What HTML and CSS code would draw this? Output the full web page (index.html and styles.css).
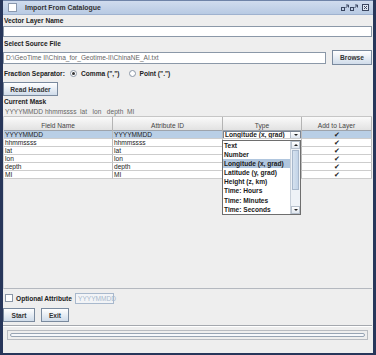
FILE: index.html
```html
<!DOCTYPE html>
<html lang="en">
<head>
    <meta charset="UTF-8">
    <title>Import From Catalogue</title>
    <link rel="stylesheet" href="styles.css">
</head>
<body>

<div class="window">
    <div class="titlebar">
        <span class="title-icon"></span>
        <span class="title">Import From Catalogue</span>
        <span class="title-buttons">
            <svg width="8" height="7" viewBox="0 0 8 7"><rect x="0.5" y="3.5" width="3" height="3" fill="none" stroke="#3a4660"/><path d="M5 1 L7.5 1 L7.5 3.5 M7.5 1 L4.5 4" fill="none" stroke="#3a4660"/></svg>
            <svg width="8" height="7" viewBox="0 0 8 7"><rect x="0.5" y="3.5" width="3" height="3" fill="none" stroke="#3a4660"/><path d="M5 1 L7.5 1 L7.5 3.5 M7.5 1 L4.5 4" fill="none" stroke="#3a4660"/></svg>
            <svg class="close" width="7" height="7" viewBox="0 0 7 7"><rect x="0.5" y="0.5" width="6" height="6" fill="#dfe7f2" stroke="#3a4660"/><path d="M2 2 L5 5 M5 2 L2 5" stroke="#3a4660"/></svg>
        </span>
    </div>

    <div class="content">
        <div class="label">Vector Layer Name</div>
        <div class="field name-field"></div>

        <div class="label">Select Source File</div>
        <div class="file-row">
            <div class="field path-field">D:\GeoTime II\China_for_Geotime-II\ChinaNE_AI.txt</div>
            <button class="btn browse">Browse</button>
        </div>

        <div class="sep-row">
            <span class="sep-label">Fraction Separator:</span>
            <span class="radio checked"></span>
            <span class="radio-text">Comma (",")</span>
            <span class="radio"></span>
            <span class="radio-text">Point (".")</span>
        </div>

        <button class="btn read-header">Read Header</button>

        <div class="label mask-label">Current Mask</div>
        <div class="mask">YYYYMMDD hhmmssss&nbsp; lat &nbsp; lon &nbsp; depth &nbsp;MI</div>

        <div class="table-pane">
            <div class="thead">
                <div class="th">Field Name</div>
                <div class="th">Attribute ID</div>
                <div class="th">Type</div>
                <div class="th">Add to Layer</div>
            </div>
            <div id="rows"></div>

            <div class="popup">
                <div class="popup-list">
                    <div class="item">Text</div>
                    <div class="item">Number</div>
                    <div class="item active">Longitude (x, grad)</div>
                    <div class="item">Latitude (y, grad)</div>
                    <div class="item">Height (z, km)</div>
                    <div class="item">Time: Hours</div>
                    <div class="item">Time: Minutes</div>
                    <div class="item">Time: Seconds</div>
                </div>
                <div class="scrollbar">
                    <div class="arrow up"></div>
                    <div class="track"><div class="thumb"></div></div>
                    <div class="arrow down"></div>
                </div>
            </div>
        </div>

        <div class="opt-row">
            <span class="checkbox"></span>
            <span class="opt-label">Optional Attribute</span>
            <div class="field opt-field">YYYYMMDD</div>
        </div>

        <div class="btn-row">
            <button class="btn start">Start</button>
            <button class="btn exit">Exit</button>
        </div>

        <div class="progress-area">
            <div class="progress"><div class="bar"></div></div>
        </div>
    </div>
</div>

<script>
const fields = ['YYYYMMDD', 'hhmmssss', 'lat', 'lon', 'depth', 'MI'];
const rows = document.getElementById('rows');

fields.forEach((f, i) => {
    const row = document.createElement('div');
    row.className = 'tr' + (i === 0 ? ' selected' : '');
    let type = '';
    if (i === 0) {
        type = '<div class="combo"><span class="combo-text">Longitude (x, grad)</span><span class="combo-btn"></span></div>';
    }
    row.innerHTML = `
        <div class="td">${f}</div>
        <div class="td">${f}</div>
        <div class="td type">${type}</div>
        <div class="td check">&#10004;</div>
    `;
    rows.appendChild(row);
});
</script>

</body>
</html>
```

FILE: styles.css
```css
body {
    margin: 0;
    padding: 0;
    font-family: 'Liberation Sans', Arial, sans-serif;
    font-size: 6.6px;
    color: #222;
}

.window {
    width: 376px;
    height: 355px;
    box-sizing: border-box;
    border-left: 3px solid #27365a;
    border-right: 3px solid #27365a;
    border-bottom: 2px solid #27365a;
    background-color: #eeeeee;
    overflow: hidden;
}

.titlebar {
    height: 15px;
    box-sizing: border-box;
    border-top: 1px solid #6f84a8;
    border-bottom: 1px solid #9fb2cf;
    background: linear-gradient(#d0dcee, #b8cae3);
    display: flex;
    align-items: center;
    padding: 0 4px 0 5px;
}

.title-icon {
    width: 7px;
    height: 7px;
    background: #fff;
    border: 1px solid #8a98ae;
    margin-right: 8px;
}

.title {
    font-weight: bold;
    font-size: 6.9px;
    color: #333;
    flex: 1;
}

.title-buttons {
    display: flex;
    gap: 1px;
    align-items: center;
}

.title-buttons .close {
    margin-left: 3px;
}

.content {
    padding: 0 1px 0 0;
}

.label {
    font-weight: bold;
    height: 11px;
    line-height: 11px;
    padding-left: 1px;
}

.field {
    background: #fff;
    border: 1px solid #8b98a8;
    height: 9px;
    line-height: 9px;
    padding-left: 2px;
    color: #666;
}

.name-field {
    margin-bottom: 1px;
}

.file-row {
    display: flex;
    align-items: center;
    height: 15px;
    margin-top: 1px;
}

.path-field {
    flex: 1;
    height: 10px;
    line-height: 10px;
}

.btn {
    font-family: 'Liberation Sans', Arial, sans-serif;
    font-size: 6.6px;
    font-weight: bold;
    color: #333;
    background: linear-gradient(#ffffff, #d0dcea);
    border: 1px solid #7a8a9e;
    padding: 0;
    height: 15px;
    cursor: pointer;
}

.browse {
    width: 40px;
    margin-left: 6px;
}

.sep-row {
    display: flex;
    align-items: center;
    height: 16px;
    padding-left: 1px;
    font-weight: bold;
}

.sep-label {
    width: 66px;
}

.radio {
    width: 5px;
    height: 5px;
    border-radius: 50%;
    border: 1px solid #8a96a6;
    background: #fff;
    margin-right: 4px;
    position: relative;
}

.radio.checked::after {
    content: '';
    position: absolute;
    left: 1px;
    top: 1px;
    width: 3px;
    height: 3px;
    border-radius: 50%;
    background: #333;
}

.radio-text {
    margin-right: 9px;
}

.read-header {
    display: block;
    width: 55px;
    height: 14px;
    margin-top: 1px;
}

.mask-label {
    height: 12px;
    line-height: 12px;
}

.mask {
    height: 8px;
    line-height: 8px;
    padding-left: 2px;
    color: #666;
}

.table-pane {
    position: relative;
    height: 172px;
    border-bottom: 1px solid #b4b8bf;
    border-left: 1px solid #d0d4da;
}

.thead,
.tr {
    display: grid;
    grid-template-columns: 109px 110px 79px 1fr;
}

.thead {
    height: 15px;
    box-sizing: border-box;
    background: linear-gradient(#fafafa, #e2e2e2);
    border-top: 1px solid #c6c6c6;
    border-bottom: 1px solid #9ea4ac;
}

.th {
    text-align: center;
    color: #444;
    line-height: 15px;
    padding-top: 1px;
    border-right: 1px solid #b4b4b4;
}

.tr {
    height: 8px;
    background: #fff;
}

.tr.selected {
    background: #b9cfe6;
}

.td {
    line-height: 8px;
    height: 8px;
    box-sizing: border-box;
    padding-left: 1px;
    border-right: 1px solid #bcbcbc;
    border-bottom: 1px solid #cdcdcd;
    overflow: hidden;
}

.td.type {
    padding: 0;
}

.td.check {
    text-align: center;
    font-size: 6.5px;
    line-height: 8px;
    color: #1a1a1a;
    padding: 0;
}

.combo {
    display: flex;
    height: 8px;
    background: #fff;
    border: 1px solid #7a8594;
    box-sizing: border-box;
}

.combo-text {
    flex: 1;
    font-weight: bold;
    line-height: 6px;
    padding-left: 1px;
}

.combo-btn {
    width: 9px;
    border-left: 1px solid #b0b8c4;
    background: linear-gradient(#ffffff, #dbe3ee);
    position: relative;
}

.combo-btn::after,
.arrow::after {
    content: '';
    position: absolute;
    left: 50%;
    top: 50%;
    margin-left: -2px;
    margin-top: -1px;
    border-left: 2px solid transparent;
    border-right: 2px solid transparent;
    border-top: 2px solid #222;
}

.popup {
    position: absolute;
    left: 218px;
    top: 24px;
    width: 79px;
    height: 75px;
    box-sizing: border-box;
    border: 1px solid #6e6e6e;
    background: #fff;
    display: flex;
}

.popup-list {
    flex: 1;
}

.item {
    height: 9.1px;
    line-height: 9.1px;
    font-weight: bold;
    padding-left: 1px;
    color: #1a1a1a;
    white-space: nowrap;
}

.item.active {
    background: #b0c6de;
}

.scrollbar {
    width: 9px;
    display: flex;
    flex-direction: column;
    border-left: 1px solid #c8d0da;
    background: #eef2f7;
}

.arrow {
    height: 8px;
    position: relative;
    background: linear-gradient(#ffffff, #dfe6ef);
    border: 1px solid #b6c0cc;
    box-sizing: border-box;
}

.arrow.up::after {
    border-top: none;
    border-bottom: 2px solid #222;
}

.track {
    flex: 1;
    padding: 0 1px;
}

.thumb {
    margin-top: 1px;
    height: 40px;
    background: linear-gradient(90deg, #d5e1ee, #c2d3e7);
    border: 1px solid #a8b8cc;
    box-sizing: border-box;
}

.opt-row {
    display: flex;
    align-items: center;
    height: 18px;
    padding-left: 2px;
}

.checkbox {
    width: 6px;
    height: 6px;
    background: #fff;
    border: 1px solid #8a96a6;
    margin-right: 3px;
}

.opt-label {
    font-weight: bold;
    width: 59px;
}

.opt-field {
    width: 35px;
    height: 9px;
    border-color: #a8b8cc;
    color: #a8b8cc;
    background: #f2f4f7;
}

.btn-row {
    display: flex;
    gap: 6px;
    height: 17px;
    align-items: flex-start;
    padding-top: 1px;
    border-bottom: 1px solid #a4a8ae;
}

.start {
    width: 32px;
    height: 14px;
}

.exit {
    width: 28px;
    height: 14px;
}

.progress-area {
    border-top: 1px solid #ffffff;
    padding: 3px 0 0 4px;
}

.progress {
    width: 361px;
    height: 10px;
    box-sizing: border-box;
    border: 1px solid #b8bcc2;
    padding: 2px 2px;
}

.bar {
    height: 4px;
    box-sizing: border-box;
    border: 1px solid #97a4b4;
    border-radius: 2px;
    background: #f6f8fb;
}
```
